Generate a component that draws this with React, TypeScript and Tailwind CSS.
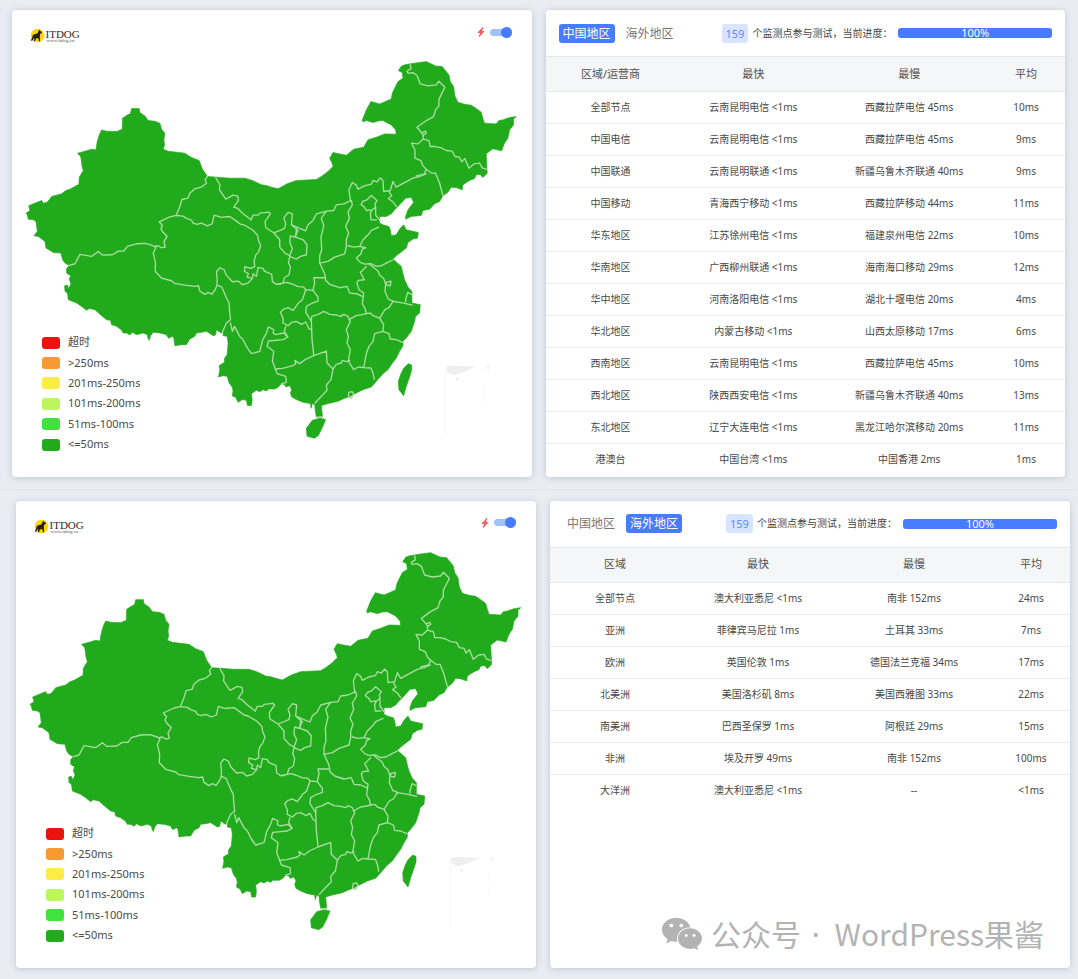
import React, { useState } from "react";
import { BsLightningChargeFill } from "react-icons/bs";
import { FaWeixin } from "react-icons/fa";

type Region = "china" | "overseas";
type Row = [string, string, string, string];

const tabs: { id: Region; label: string }[] = [
	{ id: "china", label: "中国地区" },
	{ id: "overseas", label: "海外地区" },
];

const firstColumn: Record<Region, string> = {
	china: "区域/运营商",
	overseas: "区域",
};

const results: Record<Region, Row[]> = {
	china: [
		["全部节点", "云南昆明电信 <1ms", "西藏拉萨电信 45ms", "10ms"],
		["中国电信", "云南昆明电信 <1ms", "西藏拉萨电信 45ms", "9ms"],
		["中国联通", "云南昆明联通 <1ms", "新疆乌鲁木齐联通 40ms", "9ms"],
		["中国移动", "青海西宁移动 <1ms", "西藏拉萨移动 44ms", "11ms"],
		["华东地区", "江苏徐州电信 <1ms", "福建泉州电信 22ms", "10ms"],
		["华南地区", "广西柳州联通 <1ms", "海南海口移动 29ms", "12ms"],
		["华中地区", "河南洛阳电信 <1ms", "湖北十堰电信 20ms", "4ms"],
		["华北地区", "内蒙古移动 <1ms", "山西太原移动 17ms", "6ms"],
		["西南地区", "云南昆明电信 <1ms", "西藏拉萨电信 45ms", "10ms"],
		["西北地区", "陕西西安电信 <1ms", "新疆乌鲁木齐联通 40ms", "13ms"],
		["东北地区", "辽宁大连电信 <1ms", "黑龙江哈尔滨移动 20ms", "11ms"],
		["港澳台", "中国台湾 <1ms", "中国香港 2ms", "1ms"],
	],
	overseas: [
		["全部节点", "澳大利亚悉尼 <1ms", "南非 152ms", "24ms"],
		["亚洲", "菲律宾马尼拉 1ms", "土耳其 33ms", "7ms"],
		["欧洲", "英国伦敦 1ms", "德国法兰克福 34ms", "17ms"],
		["北美洲", "美国洛杉矶 8ms", "美国西雅图 33ms", "22ms"],
		["南美洲", "巴西圣保罗 1ms", "阿根廷 29ms", "15ms"],
		["非洲", "埃及开罗 49ms", "南非 152ms", "100ms"],
		["大洋洲", "澳大利亚悉尼 <1ms", "--", "<1ms"],
	],
};

const legend = [
	{ color: "bg-[#e9140f]", label: "超时" },
	{ color: "bg-[#f89a33]", label: ">250ms" },
	{ color: "bg-[#fbec47]", label: "201ms-250ms" },
	{ color: "bg-[#bdf65c]", label: "101ms-200ms" },
	{ color: "bg-[#42e23e]", label: "51ms-100ms" },
	{ color: "bg-[#22aa1d]", label: "<=50ms" },
];

const card = "relative rounded-sm bg-white shadow-[0_1px_6px_rgba(90,115,135,0.3)]";

const ChinaMap = () => {
	return (
		<svg viewBox="36 30 1560 1401" className="block w-full" role="img" aria-label="中国地图">
			<g fill="#22aa1d" stroke="#22aa1d" strokeWidth="2" strokeLinejoin="round">
				{/* mainland */}
				<path d="M395 326L418 326L420 338L435 348L445 362L465 364L480 370L485 388L495 400L492 420L494 436L490 448L505 454L530 457L555 460L575 473L598 482L608 508L623 530L650 532L690 535L735 535L758 542L785 555L800 557L815 562L835 567L862 552L890 542L950 539L965 530L985 515L1000 500L998 492L990 475L1000 458L1018 462L1040 466L1062 448L1092 442L1105 420L1130 412L1155 402L1190 403L1188 390L1175 375L1150 362L1135 363L1120 368L1100 362L1090 366L1088 360L1100 330L1114 305L1140 312L1175 297L1178 280L1185 265L1195 245L1210 235L1208 218L1196 212L1206 198L1218 194L1250 189L1280 185L1308 198L1328 200L1348 225L1352 245L1362 260L1366 288L1375 307L1395 313L1415 316L1430 326L1445 337L1450 355L1455 370L1490 372L1498 362L1510 360L1530 353L1550 350L1542 358L1542 375L1530 390L1525 415L1515 430L1506 453L1480 447L1460 462L1462 505L1463 520L1450 533L1442 524L1430 525L1425 536L1410 542L1390 555L1388 570L1372 564L1355 562L1345 577L1330 588L1320 605L1305 612L1290 628L1270 632L1265 647L1235 650L1218 658L1218 650L1225 630L1242 608L1235 593L1218 595L1200 615L1185 630L1175 642L1160 650L1140 650L1140 670L1152 676L1168 680L1172 690L1175 708L1190 705L1200 688L1212 675L1220 690L1236 694L1256 698L1254 715L1240 718L1225 728L1220 745L1190 768L1180 778L1205 800L1210 822L1215 840L1225 862L1237 875L1237 910L1262 915L1260 940L1248 950L1245 965L1235 995L1220 1015L1210 1025L1210 1038L1200 1055L1190 1075L1175 1095L1165 1110L1150 1122L1130 1145L1115 1162L1090 1170L1060 1185L1048 1192L1035 1196L1015 1205L985 1212L965 1218L966 1228L968 1250L950 1252L947 1235L945 1215L938 1212L934 1226L932 1212L910 1208L890 1200L876 1192L872 1180L876 1170L870 1158L858 1162L855 1155L845 1152L835 1163L825 1168L806 1168L800 1174L790 1170L780 1176L770 1172L755 1182L757 1200L755 1218L743 1218L740 1202L728 1200L715 1208L708 1194L697 1188L700 1174L697 1162L688 1150L682 1130L670 1128L656 1132L660 1110L658 1098L674 1088L674 1076L682 1065L685 1030L682 1010L670 1008L670 995L664 1000L650 990L647 1006L640 1008L620 995L605 998L590 1000L585 1010L570 1018L560 1035L545 1035L525 1038L522 1016L518 1010L506 1016L500 1005L480 1000L460 998L452 1008L448 1022L444 1014L442 1005L430 1000L410 1005L398 998L390 1006L380 1000L370 1000L364 990L350 980L335 975L332 962L320 960L305 948L285 930L268 926L260 932L245 920L230 910L205 900L203 882L195 874L194 858L202 856L206 866L213 853L208 838L212 828L200 820L200 806L208 797L195 790L188 780L183 760L160 758L138 745L135 725L115 710L102 708L112 695L108 665L100 660L85 658L82 645L78 640L90 632L86 618L110 608L125 602L130 610L140 608L148 600L155 590L185 582L198 572L210 568L237 553L238 532L250 512L246 498L244 480L242 470L233 460L255 454L275 448L288 450L292 425L298 405L305 390L320 394L350 395L367 388L368 355L375 350L392 340Z" />
				{/* Hainan */}
				<path d="M920 1286L938 1262L960 1256L978 1260L968 1284L956 1308L944 1316L922 1310Z" />
				{/* Taiwan */}
				<path d="M1226 1092L1236 1096L1236 1112L1230 1132L1220 1160L1212 1188L1198 1170L1196 1145L1204 1122L1212 1106Z" />
			</g>
			<g fill="none" stroke="#a9dda0" strokeWidth="4" strokeLinejoin="round" strokeLinecap="round">
				{/* Xinjiang, Tibet, Qinghai and Gansu */}
				<g transform="translate(30 270)">
					<path d="M593 260L586 268L590 280L574 292L555 297L540 310L534 325L516 329L510 350L499 377L480 381L448 396L458 408L453 416L458 426L472 440L462 456L466 472L455 474L445 468L435 470" />
					<path d="M178 527L195 522L210 494L245 500L265 485L278 496L308 495L325 484L342 484L352 470L380 462L408 461L430 468L438 474L430 490L437 520L436 545L455 565L485 573L495 581L525 586L555 590L566 588L570 604L585 614L595 608L606 613L616 600L622 586L622 565L620 546L630 534L643 540L650 557L668 576L685 574L698 585L715 580L728 566" />
					<path d="M499 377L520 379L530 386L545 391L550 400L562 404L575 400L592 408L607 402L613 376L635 383L645 381L660 380L680 394L690 402L702 405L728 420L744 437L746 452L753 468L746 487L738 496L733 513L735 530L724 536L705 531L704 545L716 552L712 562L728 566L730 552L740 560L745 533L760 536L764 544L786 554L788 576L800 584L812 584" />
					<path d="M618 264L630 284L629 300L648 328L670 316L684 319L686 332L672 352L684 356L700 372L724 390M622 586L636 592L650 625L658 640L659 662L662 690L650 700L638 726" />
				</g>
				{/* central and southern provinces */}
				<g transform="translate(600 450)">
					<path d="M154 210L160 196L175 196L180 190L207 187L212 192L196 215L198 234L222 249L245 240L255 235L258 222L252 205L265 188L278 192L275 225L295 242L285 262L272 258L270 278L278 296L270 318L256 310L240 292L240 270L222 249" />
					<path d="M278 226L298 235L318 243L325 225L340 212L350 192L380 184L402 182L410 165L432 162L455 152L458 165L445 186L449 205L438 230L447 250L440 270L440 290L435 312L405 322L385 335L360 340L360 318L366 300L364 262L372 228L365 205L380 184" />
					<path d="M290 236L288 262L310 270L322 285L320 315L302 320L290 328L270 320L266 338L272 352L268 375L254 384L250 400L260 398L275 402L294 410L312 412L318 420L340 422L355 442L355 454L334 462L320 470L318 488L335 515L337 570L342 615" />
					<path d="M230 404L250 400M318 420L308 450L296 460L280 482L266 474L252 478L242 488L250 506L250 520L265 528L276 518L290 515L306 524L318 517L328 537L335 540" />
					<path d="M452 152L448 120L458 98L470 106L475 118L494 108L515 103L520 92L532 96L542 84L550 92L552 125L572 122L580 95L590 112L612 100L640 85L660 80L680 72" />
					<path d="M568 125L576 138L566 146L580 156L590 170M484 164L490 154L502 150L515 137L532 152L526 162L528 172L518 180L500 182L494 172ZM528 172L528 195L540 212M518 180L512 190L514 210L530 210" />
					<path d="M537 232L515 242L508 252L490 270L480 290L462 292L445 288M480 290L498 294L488 298L484 312L470 325L482 338L495 343L515 342L530 350L545 348L560 340L580 330M500 350L482 368L494 390L476 392L472 400L478 420L492 430L488 462L496 476L500 492L512 490L520 498L540 505L556 480L568 474L580 455L612 460L638 466" />
					<path d="M360 340L375 372L378 392L392 405L420 414L442 410L450 430L470 432L488 440M342 384L375 384M342 384L345 398L340 422M508 342L520 352L535 364L540 376L552 386L558 404L556 425L566 448L582 455M560 398L574 394L572 408L560 406ZM618 456L618 450L624 428L636 434" />
					<path d="M335 515L336 500L355 494L372 485L390 494L410 496L424 500L432 494L445 500L452 515L440 540L446 560L442 580L452 600L446 634L462 660L476 652L492 654L514 655L520 670L524 690M448 510L470 498L488 495L500 492M540 505L552 525L550 545L525 552L520 575L508 590L500 612L492 654M550 545L568 552L572 568L590 570L608 578" />
					<path d="M92 520L98 545L104 530L120 560L130 570L142 594L155 612L180 605L188 572L200 550L206 532L222 540L220 550L228 555L252 550L264 562L250 570L206 574L202 590L222 605L218 635L226 655L232 672L258 680L260 698L246 702" />
					<path d="M226 658L248 656L280 648L288 642L285 632L300 642L316 630L342 618L380 604L382 640L400 658L410 644L425 640L428 632L440 636L450 632M400 658L394 690L380 706L382 722L360 745L346 760M264 562L254 544L258 530M447 728L458 726L462 734L454 746L446 742ZM350 803L370 803" />
				</g>
				{/* north-east */}
				<g transform="translate(900 150)">
					<path d="M332 44L334 56L322 64L325 70L340 68L352 76L362 102L385 108L410 105L418 94L436 112L426 132L418 148L418 168L408 180L402 200L380 212L352 232L372 256L380 250L378 244L368 248M370 256L372 268L388 272L392 290L408 290L425 294L440 302L458 304L466 320L480 322L486 336L496 326L508 355L524 342L540 340L548 354L560 358" />
					<path d="M370 268L355 282L336 280L346 300L346 325L364 332L370 348L380 358L374 372L350 378M380 358L396 370L408 370L420 400L430 437" />
				</g>
			</g>
			{/* South China Sea inset */}
			<g fill="#efefef">
				<path d="M1341 1100L1360 1098L1430 1100L1392 1117L1362 1126L1344 1118Z" />
				<path d="M1368 1136L1380 1134L1370 1146ZM1460 1101L1470 1099L1466 1114Z" />
			</g>
			<path d="M1338 1105V1310M1455 1150V1166M1455 1188V1212" fill="none" stroke="#f6f6f6" strokeWidth="3" />
		</svg>
	);
};

const Logo = () => {
	return (
		<svg viewBox="0 0 52 18" className="absolute top-4 left-4 h-[18px] w-[52px]" role="img" aria-label="ITDOG">
			<circle cx="9.5" cy="9.5" r="6.8" fill="#fbd40b" />
			<path
				d="M11.4 3.6l.9 1.5 1.7.8-.3 1.1-1.4.4-.5 2.6.3 5.2h-1.1l-.8-3.2-2.1.4-1.2 2.8H5.8l.6-2.8-.6-.4-1.2 2.4-1.9.4 1.6-3.2.4-2.4 1.7-1 2.9-.6z"
				fill="#241f17"
			/>
			<text x="17.5" y="12" fontSize="11" fontFamily="Liberation Serif, serif" fill="#2b2b2b">
				ITDOG
			</text>
			<text x="18.5" y="16" fontSize="5" fontFamily="Liberation Serif, serif" fill="#555">
				www.itdog.cn
			</text>
		</svg>
	);
};

const MapCard = () => {
	return (
		<div className={card}>
			<ChinaMap />
			<Logo />
			<label className="absolute top-4 right-5 flex h-3 items-center gap-1">
				<BsLightningChargeFill className="size-[10px] text-[#f0605c]" />
				<input
					type="checkbox"
					role="switch"
					aria-label="快速模式"
					defaultChecked
					className="relative h-[7px] w-[22px] appearance-none rounded-full bg-[#a3c0fb] before:absolute before:-top-[2px] before:left-0 before:size-[11px] before:rounded-full before:bg-[#477cff] checked:before:left-[11px]"
				/>
			</label>
			<ul className="absolute bottom-[22px] left-[30px] flex h-[122px] flex-col justify-between text-[11px] text-[#4a4a4a]">
				{legend.map((item) => (
					<li key={item.label} className="flex h-5 items-center gap-2">
						<span className={`h-3 w-[18px] rounded-[3px] ${item.color}`} />
						{item.label}
					</li>
				))}
			</ul>
		</div>
	);
};

type Props = {
	initial: Region;
	children?: React.ReactNode;
};

const ResultCard = ({ initial, children }: Props) => {
	const [active, setActive] = useState<Region>(initial);

	return (
		<div className={card}>
			<div className="flex h-[46px] items-center px-[13px]">
				<div className="flex gap-[7px]">
					{tabs.map((tab) => (
						<button
							key={tab.id}
							type="button"
							onClick={() => setActive(tab.id)}
							className={`h-[19px] rounded-[3px] px-1 text-xs leading-[19px] whitespace-nowrap ${
								active === tab.id ? "bg-[#477cff] text-white" : "text-[#777]"
							}`}
						>
							{tab.label}
						</button>
					))}
				</div>
				<span className="ml-11 h-[19px] rounded-[3px] bg-[#d9e5ff] px-1 text-[11px] leading-[19px] text-[#5a8bff]">
					159
				</span>
				<span className="ml-1 text-[10px] whitespace-nowrap text-[#444]">个监测点参与测试，当前进度：</span>
				<div
					role="progressbar"
					aria-valuenow={100}
					className="ml-1.5 h-[10px] grow rounded-[3px] bg-[#477cff] text-center text-[11px] leading-[10px] text-white"
				>
					100%
				</div>
			</div>
			<table className="w-full table-fixed text-center text-[10px] text-[#484848]">
				<thead>
					<tr className="h-[35px] border-y border-[#e6e8ea] bg-[#f5f6f7] text-[11px] text-[#505050]">
						<th className="w-[25%] font-normal">{firstColumn[active]}</th>
						<th className="w-[30%] font-normal">最快</th>
						<th className="w-[30%] font-normal">最慢</th>
						<th className="w-[15%] font-normal">平均</th>
					</tr>
				</thead>
				<tbody>
					{results[active].map((row) => (
						<tr key={row[0]} className="h-8 border-b border-[#e9ecef] last:border-b-0">
							{row.map((cell, i) => (
								<td key={i} className="whitespace-nowrap">
									{cell}
								</td>
							))}
						</tr>
					))}
				</tbody>
			</table>
			{children}
		</div>
	);
};

const App = () => {
	return (
		<main className="min-h-screen bg-[#e9ecf2] font-['Noto_Sans','Noto_Sans_CJK_SC',sans-serif]">
			<section className="grid grid-cols-2 gap-[14px] border-b border-[#e1e5eb] pt-[10px] pr-[13px] pb-3 pl-3">
				<MapCard />
				<ResultCard initial="china" />
			</section>
			<section className="grid grid-cols-2 gap-[14px] pt-[11px] pr-2 pb-[10px] pl-4">
				<MapCard />
				<ResultCard initial="overseas">
					<div className="absolute right-[26px] bottom-[11px] flex items-center gap-2 font-['Noto_Sans_CJK_SC',sans-serif] text-[30px] whitespace-nowrap text-[#b3b3b3]">
						<FaWeixin className="size-[42px]" />
						<span>
							公众号 <span className="mr-2 ml-1 font-['Noto_Sans',sans-serif]">·</span> WordPress果酱
						</span>
					</div>
				</ResultCard>
			</section>
		</main>
	);
};

export default App;
